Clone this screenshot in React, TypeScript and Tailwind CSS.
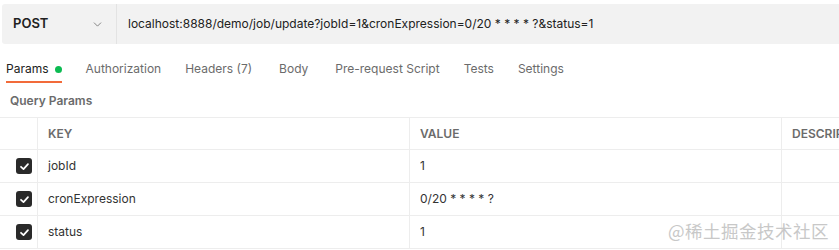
import { ChevronDown } from 'lucide-react'

const tabs = ['Authorization', 'Headers (7)', 'Body', 'Pre-request Script', 'Tests', 'Settings']

const rows = [
  { key: 'jobId', value: '1' },
  { key: 'cronExpression', value: '0/20 * * * * ?' },
  { key: 'status', value: '1' },
]

function Check() {
  return (
    <div className="w-4 h-4 rounded-[3px] bg-[#2a2a2a] flex items-center justify-center">
      <svg width="11" height="11" viewBox="0 0 12 12" fill="none">
        <path d="M2.2 6.3 L4.9 8.8 L9.8 3.4" stroke="#fff" strokeWidth="1.9" strokeLinecap="round" strokeLinejoin="round" />
      </svg>
    </div>
  )
}

export default function App() {
  return (
    <div className="w-[839px] h-[250px] bg-white overflow-hidden relative font-['Inter',sans-serif] text-[12px] text-[#212121]">
      {/* request bar */}
      <div className="mt-1 ml-[2px] h-10 flex bg-[#f2f2f2] rounded-l-[3px]">
        <div className="w-[115px] shrink-0 flex items-center justify-between pl-[11px] pr-[12px] border-r border-[#e3e3e3]">
          <span className="font-semibold text-[13px] text-[#212121]">POST</span>
          <ChevronDown size={13} strokeWidth={1.5} className="text-[#6b6b6b]" />
        </div>
        <div className="flex items-center pl-[11px] text-[#212121] whitespace-nowrap">
          localhost:8888/demo/job/update?jobId=1&amp;cronExpression=0/20 * * * * ?&amp;status=1
        </div>
      </div>

      {/* tabs */}
      <div className="mt-[14px] flex items-start h-[26px] pl-[6px] text-[12px]">
        <div className="flex flex-col mr-6">
          <div className="flex items-center gap-[6px] h-[22px]">
            <span>Params</span>
            <span className="w-[7px] h-[7px] rounded-full bg-[#0cbb52]" />
          </div>
          <div className="h-[2px] bg-[#f26b3a] mt-[1px]" />
        </div>
        <div className="flex gap-6 h-[22px] items-center text-[#6b6b6b] whitespace-nowrap">
          {tabs.map((t) => (
            <span key={t} className={t === 'Body' ? 'mx-[3px]' : ''}>{t}</span>
          ))}
        </div>
      </div>

      <div className="mt-[8px] pl-[10px] h-[25px] text-[12px] font-semibold text-[#6b6b6b]">Query Params</div>

      {/* table */}
      <div className="border-t border-[#ededed]">
        <div className="flex h-[32px] border-b border-[#ededed] text-[12px] font-semibold text-[#6b6b6b] whitespace-nowrap">
          <div className="w-[38px] shrink-0 border-r border-[#ededed]" />
          <div className="w-[372px] shrink-0 border-r border-[#ededed] flex items-center pl-[10px]">KEY</div>
          <div className="w-[372px] shrink-0 border-r border-[#ededed] flex items-center pl-[10px]">VALUE</div>
          <div className="flex-1 flex items-center pl-[10px]">DESCRIPTION</div>
        </div>
        {rows.map((r) => (
          <div key={r.key} className="flex h-[33px] border-b border-[#ededed] text-[12px]">
            <div className="w-[38px] shrink-0 border-r border-[#ededed] flex items-center justify-end pr-[5px]">
              <Check />
            </div>
            <div className="w-[372px] shrink-0 border-r border-[#ededed] flex items-center pl-[10px] text-[#333]">{r.key}</div>
            <div className="w-[372px] shrink-0 border-r border-[#ededed] flex items-center pl-[10px] text-[#333]">{r.value}</div>
            <div className="flex-1" />
          </div>
        ))}
      </div>

      <div className="absolute left-[668px] top-[218px] text-[17.5px] text-[#c8c8c8] font-['Noto_Sans_CJK_SC',sans-serif] tracking-[0.5px]">
        @稀土掘金技术社区
      </div>
    </div>
  )
}
